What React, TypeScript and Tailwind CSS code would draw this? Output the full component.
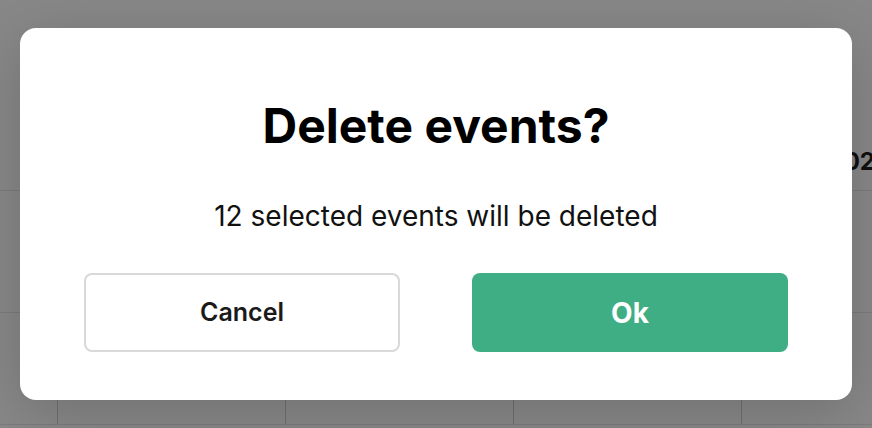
function Calendar() {
  const cols = [0, 1, 2, 3, 4];
  return (
    <div className="flex h-[428px] w-[872px] flex-col bg-white">
      <div className="flex h-[191px] justify-end border-b border-[#e6e6e6] pt-[144px]">
        <span className="-mr-[3px] text-[24px] font-bold text-[#1f1f22]">02</span>
      </div>
      <div className="h-[122px] border-b border-[#e6e6e6]" />
      <div className="flex h-[112px] border-b border-[#e6e6e6]">
        {cols.map((c) => (
          <div
            key={c}
            className={
              c === 0
                ? "w-[58px] shrink-0 border-r border-[#d0d0d0]"
                : "w-[228px] shrink-0 border-r border-[#d0d0d0]"
            }
          />
        ))}
      </div>
    </div>
  );
}

export default function App() {
  return (
    <div className="relative h-[428px] w-[872px] overflow-hidden font-['Inter',sans-serif]">
      <Calendar />

      {/* dialog overlay */}
      <div className="absolute inset-0 flex items-start justify-center bg-[rgba(0,0,0,0.465)] pt-[28px]">
        <div className="flex h-[372px] w-[832px] flex-col items-center rounded-[16px] bg-white px-[64px] pt-[74px] shadow-[0_12px_60px_rgba(0,0,0,0.18)]">
          <h1 className="text-[48px] font-bold leading-[48px] text-black">Delete events?</h1>
          <p className="mt-[52px] text-[28px] leading-[28px] text-[#111]">12 selected events will be deleted</p>
          <div className="mt-[43px] flex w-full justify-between">
            <button className="h-[79px] w-[316px] rounded-[8px] border-2 border-[#d9d9d9] bg-white text-[25px] font-semibold text-[#1a1a1a]">
              Cancel
            </button>
            <button className="h-[79px] w-[316px] rounded-[8px] bg-[#3fae84] text-[28px] font-bold text-white">
              Ok
            </button>
          </div>
        </div>
      </div>
    </div>
  );
}
